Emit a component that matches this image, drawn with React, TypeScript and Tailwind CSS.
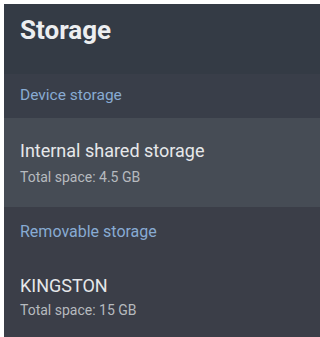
export default function App() {
  return (
    <div
      className="w-[320px] h-[337px] bg-white pt-[4px] pl-[4px] overflow-hidden"
      style={{ fontFamily: "Roboto, 'Noto Sans', sans-serif" }}
    >
      <div className="h-full bg-[#3b3e48] flex flex-col">
        {/* Title bar */}
        <div className="h-[70px] shrink-0 bg-[#343b45] px-[16px] pt-[10px]">
          <h1 className="text-[26px] font-bold text-[#eceef0] leading-[32px]">Storage</h1>
        </div>

        {/* Device storage */}
        <div className="h-[44px] shrink-0 bg-[#393e49] px-[16px] flex items-center">
          <span className="text-[15.5px] text-[#88abd3]">Device storage</span>
        </div>
        <div className="h-[89px] shrink-0 bg-[#464c55] px-[16px] flex flex-col justify-center">
          <div className="text-[18px] text-[#e6e8ea] leading-[22px]">Internal shared storage</div>
          <div className="text-[14px] text-[#b6babf] leading-[18px] mt-[6px]">Total space: 4.5 GB</div>
        </div>

        {/* Removable storage */}
        <div className="h-[49px] shrink-0 px-[16px] flex items-center">
          <span className="text-[16px] text-[#88abd3]">Removable storage</span>
        </div>
        <div className="flex-1 px-[16px] pt-[19px]">
          <div className="text-[18px] text-[#e6e8ea] leading-[22px]">KINGSTON</div>
          <div className="text-[14px] text-[#b6babf] leading-[18px] mt-[4px]">Total space: 15 GB</div>
        </div>
      </div>
    </div>
  );
}
